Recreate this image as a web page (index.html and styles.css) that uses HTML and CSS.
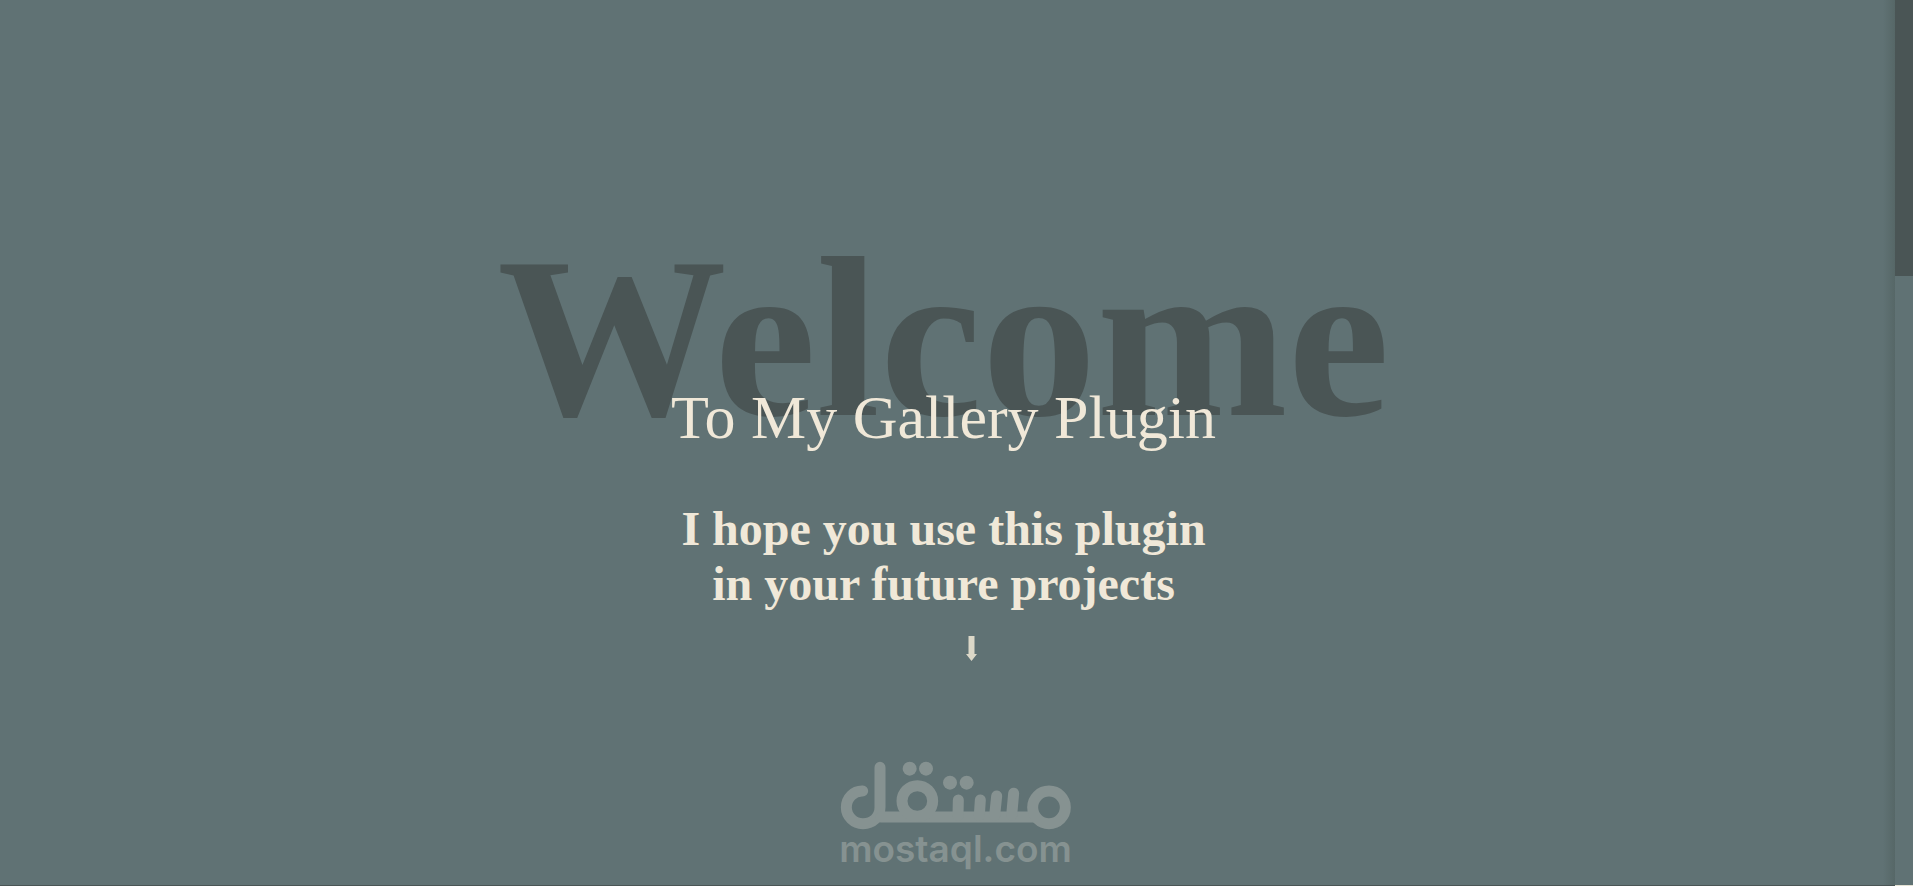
FILE: index.html
```
<!DOCTYPE html>
<html lang="en">

<head>
    <meta charset="UTF-8">
    <meta name="viewport" content="width=device-width, initial-scale=1.0">
    <title>Gallery Plugin</title>
    <link rel="stylesheet" href="styles.css">
</head>

<body>
    <main class="page">
        <header class="welcome">
            <h1>Welcome</h1>
            <p class="subtitle">To My Gallery Plugin</p>
            <h2>I hope you use this plugin<br>in your future projects</h2>
            <div class="scroll-hint">
                <svg class="arrow" viewBox="0 0 11 25" aria-hidden="true">
                    <path d="M2.500 0h6v18H11L5.500 25 0 18h2.500z" />
                </svg>
            </div>
        </header>

        <footer class="brand">
            <svg class="brand-logo" viewBox="60 64 696 210" role="img" aria-label="مستقل">
                <g class="strokes">
                    <path d="M128 154c-27-1-49 21-49 49 0 27 22 49 50 49 29 0 51-20 51-49V83" />
                    <path d="M183 232H642" />
                    <circle cx="292" cy="184" r="46" />
                    <circle cx="687" cy="203" r="49" />
                    <path d="M415 181l-1 46M481 181l-3 46M530 169l-6 58M581 161l-6 66" />
                </g>
                <circle cx="269" cy="87" r="21" />
                <circle cx="318" cy="87" r="21" />
                <circle cx="390" cy="129" r="21" />
                <circle cx="440" cy="129" r="21" />
            </svg>
            <span class="brand-name">mostaql.com</span>
        </footer>
    </main>

    <div class="scrollbar">
        <div class="thumb"></div>
    </div>
</body>

</html>
```

FILE: styles.css
```
* {
    box-sizing: border-box;
}

body {
    margin: 0;
    height: 100vh;
    display: flex;
    overflow: hidden;
    background-color: #607274;
    color: #f0e8d8;
    font-family: "Liberation Serif", "Times New Roman", serif;
    text-align: center;
}

.page {
    flex: 1;
    display: flex;
    flex-direction: column;
    justify-content: space-between;
    padding: 206px 0 18px;
    border-bottom: 1px solid #4a5555;
    background: linear-gradient(to left, #566767, #607274 12px);
}

.welcome {
    padding-right: 8px;
}

h1,
h2,
p {
    margin: 0;
}

h1 {
    color: #4a5555;
    font-size: 12vw;
    line-height: 264px;
}

.subtitle {
    margin-top: -89px;
    font-size: 62px;
    line-height: 72px;
}

h2 {
    margin-top: 48px;
    font-size: 48px;
    line-height: 55px;
}

.scroll-hint {
    display: flex;
    justify-content: center;
    margin-top: 25px;
    padding-left: 56px;
}

.arrow {
    width: 11px;
    height: 25px;
    fill: #dcd8c8;
}

.brand {
    display: flex;
    flex-direction: column;
    align-items: center;
    padding-left: 16px;
    color: #869291;
}

.brand-logo {
    width: 232px;
    height: 70px;
    fill: #869291;
}

.strokes {
    fill: none;
    stroke: #869291;
    stroke-width: 33;
    stroke-linecap: round;
}

.brand-name {
    font-family: Inter, sans-serif;
    font-size: 37px;
    font-weight: 600;
    line-height: 36px;
}

.scrollbar {
    width: 18px;
    background-color: #607274;
    border-bottom: 1px solid #e4e2d4;
}

.thumb {
    height: 276px;
    background-color: #4a5555;
}
```
